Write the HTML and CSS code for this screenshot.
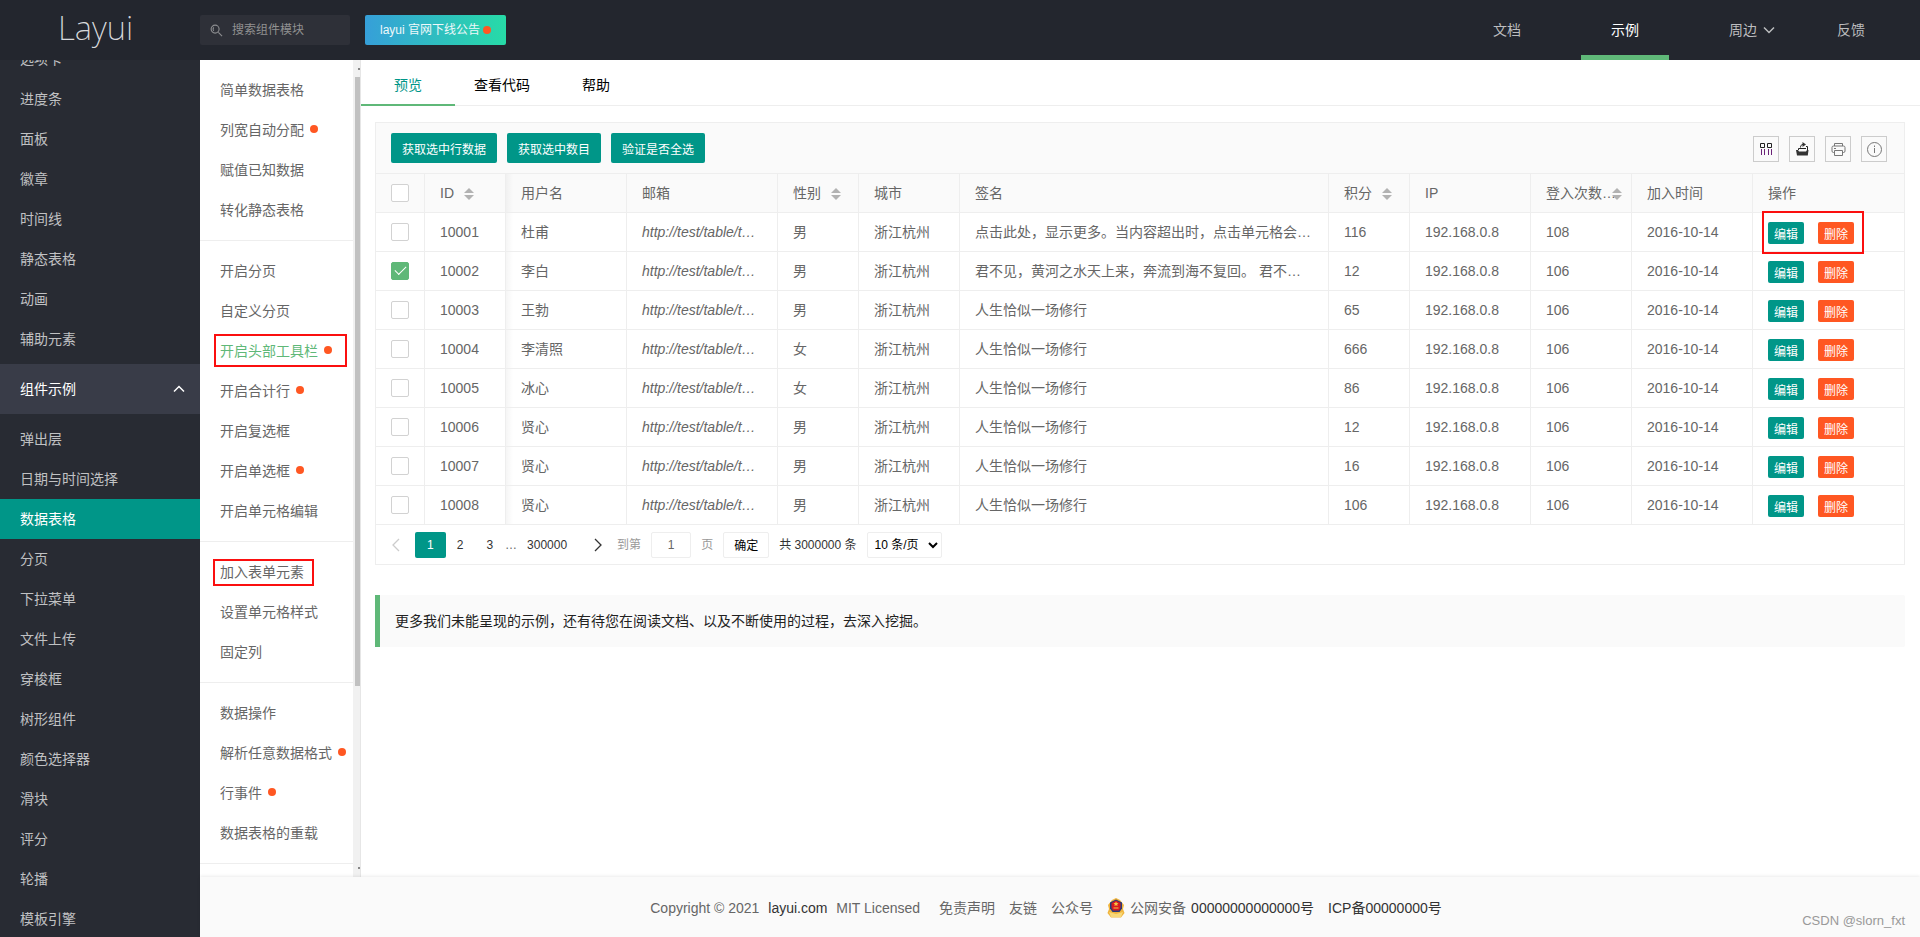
FILE: index.html
```html
<!DOCTYPE html>
<html lang="zh-CN">
<head>
<meta charset="utf-8">
<title>数据表格 - Layui</title>
<link rel="stylesheet" href="styles.css">
</head>
<body>
<header class="header">
  <a class="logo" href="#">Layui</a>
  <label class="search">
    <svg class="search-icon" viewBox="0 0 14 14" aria-hidden="true"><circle cx="5.5" cy="5.5" r="4.3"/><path d="M4 3.6a3 3 0 0 0 0 3.8M9 9l4 4"/></svg>
    <input type="text" placeholder="搜索组件模块" aria-label="搜索组件模块">
  </label>
  <a class="notice" href="#">layui 官网下线公告<i class="dot"></i></a>
  <nav class="top-nav">
    <a href="#">文档</a>
    <a href="#" class="active">示例</a>
    <a href="#" class="has-more">周边<svg class="chevron" viewBox="0 0 12 8" aria-hidden="true"><path d="M1 1.500l5 5 5-5"/></svg></a>
    <a href="#">反馈</a>
  </nav>
</header>
<div class="body">
  <aside class="side">
    <ul class="side-list side-first">
      <li><a href="#">选项卡</a></li>
      <li><a href="#">进度条</a></li>
      <li><a href="#">面板</a></li>
      <li><a href="#">徽章</a></li>
      <li><a href="#">时间线</a></li>
      <li><a href="#">静态表格</a></li>
      <li><a href="#">动画</a></li>
      <li><a href="#">辅助元素</a></li>
    </ul>
    <a class="side-title" href="#">组件示例<svg class="chevron" viewBox="0 0 12 8" aria-hidden="true"><path d="M1 6.500l5-5 5 5"/></svg></a>
    <ul class="side-list">
      <li><a href="#">弹出层</a></li>
      <li><a href="#">日期与时间选择</a></li>
      <li><a href="#" class="active">数据表格</a></li>
      <li><a href="#">分页</a></li>
      <li><a href="#">下拉菜单</a></li>
      <li><a href="#">文件上传</a></li>
      <li><a href="#">穿梭框</a></li>
      <li><a href="#">树形组件</a></li>
      <li><a href="#">颜色选择器</a></li>
      <li><a href="#">滑块</a></li>
      <li><a href="#">评分</a></li>
      <li><a href="#">轮播</a></li>
      <li><a href="#">模板引擎</a></li>
    </ul>
  </aside>
  <div class="page">
    <div class="content">
      <div class="sub">
        <div class="sub-menu">
          <ul>
            <li><a href="#">简单数据表格</a></li>
            <li><a href="#">列宽自动分配<i class="dot"></i></a></li>
            <li><a href="#">赋值已知数据</a></li>
            <li><a href="#">转化静态表格</a></li>
          </ul>
          <ul>
            <li><a href="#">开启分页</a></li>
            <li><a href="#">自定义分页</a></li>
            <li class="framed frame-tall"><a href="#" class="current">开启头部工具栏<i class="dot"></i></a></li>
            <li><a href="#">开启合计行<i class="dot"></i></a></li>
            <li><a href="#">开启复选框</a></li>
            <li><a href="#">开启单选框<i class="dot"></i></a></li>
            <li><a href="#">开启单元格编辑</a></li>
          </ul>
          <ul>
            <li class="framed frame-short"><a href="#">加入表单元素</a></li>
            <li><a href="#">设置单元格样式</a></li>
            <li><a href="#">固定列</a></li>
          </ul>
          <ul>
            <li><a href="#">数据操作</a></li>
            <li><a href="#">解析任意数据格式<i class="dot"></i></a></li>
            <li><a href="#">行事件<i class="dot"></i></a></li>
            <li><a href="#">数据表格的重载</a></li>
          </ul>
        </div>
        <div class="scrollbar" aria-hidden="true"><i class="arrow up"></i><span class="thumb"></span><i class="arrow down"></i></div>
      </div>
      <main class="main">
        <nav class="tabs">
          <a href="#" class="active">预览</a>
          <a href="#">查看代码</a>
          <a href="#">帮助</a>
        </nav>
        <section class="table-box">
          <div class="toolbar">
            <button type="button" class="btn">获取选中行数据</button>
            <button type="button" class="btn">获取选中数目</button>
            <button type="button" class="btn">验证是否全选</button>
            <div class="tools">
              <button type="button" class="tool" aria-label="筛选列"><svg viewBox="0 0 16 16"><path class="ink" d="M2.500 2.500h4v4h-4zM9.500 2.500h4v4h-4z"/><path class="violet" d="M3.500 8v6M6.500 8v6M10.500 8v6M13.500 8v6"/></svg></button>
              <button type="button" class="tool" aria-label="导出"><svg viewBox="0 0 16 16"><path class="solid" d="M2 9h2l1 1.500h7L13 9h1.500l-.7 5.500H3z"/><path class="ink" d="M4.500 9V7.500h3M12 5.500h1.500V9M7 7.500h5"/><path class="ink" d="M6.500 6.500c0-2 1-3 2.500-3"/><path class="solid" d="M8.500 1l3.500 2.500L8.500 6z"/></svg></button>
              <button type="button" class="tool" aria-label="打印"><svg viewBox="0 0 16 16"><g class="gray"><path d="M4.500 5V2.500h8V5M4.500 11.500H3.500A1.500 1.500 0 0 1 2 10V6.500A1.500 1.500 0 0 1 3.500 5h10A1.500 1.500 0 0 1 15 6.500V10a1.500 1.500 0 0 1-1.500 1.500h-1M4.500 9.500h8v5h-8zM4 7.500h2"/></g></svg></button>
              <button type="button" class="tool" aria-label="提示"><svg viewBox="0 0 16 16"><g class="gray"><circle cx="8.500" cy="8.500" r="7"/><path d="M8.500 7v5M8.500 4.500V6"/></g></svg></button>
            </div>
          </div>
          <table class="grid">
            <colgroup><col class="w-check"><col class="w-80"><col class="w-120"><col class="w-150"><col class="w-80"><col class="w-100"><col><col class="w-80"><col class="w-120"><col class="w-100"><col class="w-120"><col class="w-150"></colgroup>
            <thead>
              <tr>
                <th><input type="checkbox" aria-label="全选"></th>
                <th>ID<i class="sort"></i></th>
                <th>用户名</th>
                <th>邮箱</th>
                <th>性别<i class="sort"></i></th>
                <th>城市</th>
                <th>签名</th>
                <th>积分<i class="sort"></i></th>
                <th>IP</th>
                <th class="tight">登入次数…<i class="sort"></i></th>
                <th>加入时间</th>
                <th>操作</th>
              </tr>
            </thead>
            <tbody>
              <tr><td><input type="checkbox" aria-label="选择 10001"></td><td>10001</td><td>杜甫</td><td><a href="#">http://test/table/t…</a></td><td>男</td><td>浙江杭州</td><td>点击此处，显示更多。当内容超出时，点击单元格会…</td><td>116</td><td>192.168.0.8</td><td>108</td><td>2016-10-14</td><td class="ops ops-framed"><button type="button" class="mini">编辑</button><button type="button" class="mini danger">删除</button></td></tr>
              <tr><td><input type="checkbox" checked aria-label="选择 10002"></td><td>10002</td><td>李白</td><td><a href="#">http://test/table/t…</a></td><td>男</td><td>浙江杭州</td><td>君不见，黄河之水天上来，奔流到海不复回。 君不…</td><td>12</td><td>192.168.0.8</td><td>106</td><td>2016-10-14</td><td class="ops"><button type="button" class="mini">编辑</button><button type="button" class="mini danger">删除</button></td></tr>
              <tr><td><input type="checkbox" aria-label="选择 10003"></td><td>10003</td><td>王勃</td><td><a href="#">http://test/table/t…</a></td><td>男</td><td>浙江杭州</td><td>人生恰似一场修行</td><td>65</td><td>192.168.0.8</td><td>106</td><td>2016-10-14</td><td class="ops"><button type="button" class="mini">编辑</button><button type="button" class="mini danger">删除</button></td></tr>
              <tr><td><input type="checkbox" aria-label="选择 10004"></td><td>10004</td><td>李清照</td><td><a href="#">http://test/table/t…</a></td><td>女</td><td>浙江杭州</td><td>人生恰似一场修行</td><td>666</td><td>192.168.0.8</td><td>106</td><td>2016-10-14</td><td class="ops"><button type="button" class="mini">编辑</button><button type="button" class="mini danger">删除</button></td></tr>
              <tr><td><input type="checkbox" aria-label="选择 10005"></td><td>10005</td><td>冰心</td><td><a href="#">http://test/table/t…</a></td><td>女</td><td>浙江杭州</td><td>人生恰似一场修行</td><td>86</td><td>192.168.0.8</td><td>106</td><td>2016-10-14</td><td class="ops"><button type="button" class="mini">编辑</button><button type="button" class="mini danger">删除</button></td></tr>
              <tr><td><input type="checkbox" aria-label="选择 10006"></td><td>10006</td><td>贤心</td><td><a href="#">http://test/table/t…</a></td><td>男</td><td>浙江杭州</td><td>人生恰似一场修行</td><td>12</td><td>192.168.0.8</td><td>106</td><td>2016-10-14</td><td class="ops"><button type="button" class="mini">编辑</button><button type="button" class="mini danger">删除</button></td></tr>
              <tr><td><input type="checkbox" aria-label="选择 10007"></td><td>10007</td><td>贤心</td><td><a href="#">http://test/table/t…</a></td><td>男</td><td>浙江杭州</td><td>人生恰似一场修行</td><td>16</td><td>192.168.0.8</td><td>106</td><td>2016-10-14</td><td class="ops"><button type="button" class="mini">编辑</button><button type="button" class="mini danger">删除</button></td></tr>
              <tr><td><input type="checkbox" aria-label="选择 10008"></td><td>10008</td><td>贤心</td><td><a href="#">http://test/table/t…</a></td><td>男</td><td>浙江杭州</td><td>人生恰似一场修行</td><td>106</td><td>192.168.0.8</td><td>106</td><td>2016-10-14</td><td class="ops"><button type="button" class="mini">编辑</button><button type="button" class="mini danger">删除</button></td></tr>
            </tbody>
          </table>
          <div class="pager">
            <a href="#" class="arrow-link off" aria-label="上一页"><svg viewBox="0 0 8 14"><path d="M7 1L1 7l6 6"/></svg></a>
            <a href="#" class="num on">1</a>
            <a href="#" class="num">2</a>
            <a href="#" class="num">3</a>
            <span class="gap">…</span>
            <a href="#" class="num">300000</a>
            <a href="#" class="arrow-link" aria-label="下一页"><svg viewBox="0 0 8 14"><path d="M1 1l6 6-6 6"/></svg></a>
            <label class="jump">到第<input type="text" value="1">页</label>
            <button type="button" class="confirm">确定</button>
            <span class="total">共 3000000 条</span>
            <select class="limit" aria-label="每页条数"><option>10 条/页</option><option>20 条/页</option></select>
          </div>
        </section>
        <blockquote class="quote">更多我们未能呈现的示例，还有待您在阅读文档、以及不断使用的过程，去深入挖掘。</blockquote>
      </main>
    </div>
    <footer class="footer">
      <p class="copyright">Copyright © 2021 <a href="#" class="strong">layui.com</a> MIT Licensed</p>
      <a href="#">免责声明</a>
      <a href="#">友链</a>
      <a href="#">公众号</a>
      <span class="police"><svg viewBox="0 0 18 20" aria-hidden="true"><path fill="#f0b43c" d="M9 0l4 2 4 5-1 4 1.500 4-3.500 4.500H4L.5 15 2 11 1 7l4-5z"/><path fill="#f8d878" d="M2 14l7 2 7-2-2 5H4z"/><path fill="#273a78" d="M3 4.500L9 1.500l6 3v6L12.500 14h-7L3 10.500z"/><path fill="#d7191f" d="M4.500 5L9 2.500 13.500 5v5L12 12.500H6L4.500 10z"/><path fill="#f6c445" d="M9 3.500l.8 1.600 1.700.2-1.300 1.100.4 1.700L9 7.300l-1.600.8.4-1.700-1.300-1.100 1.700-.2zM6.500 9.500h5v1h-5z"/></svg>公网安备 <a href="#" class="strong">00000000000000号</a></span>
      <a href="#" class="strong">ICP备00000000号</a>
    </footer>
  </div>
</div>
<span class="watermark">CSDN @slorn_fxt</span>
</body>
</html>
```

FILE: styles.css
```css
*, *::before, *::after { box-sizing: border-box; }

body {
  margin: 0;
  height: 100vh;
  display: flex;
  flex-direction: column;
  overflow: hidden;
  background: #fff;
  color: #333;
  font: 14px/24px "Liberation Sans", "Noto Sans CJK SC", sans-serif;
}

a { color: inherit; text-decoration: none; }
ul { margin: 0; padding: 0; list-style: none; }
button, input, select { font-family: inherit; margin: 0; }

.dot {
  display: inline-block;
  width: 8px;
  height: 8px;
  border-radius: 50%;
  background: #ff5722;
}

.chevron {
  width: 12px;
  height: 8px;
  fill: none;
  stroke: currentColor;
  stroke-width: 1.5;
}

/* Header */
.header {
  flex: none;
  display: flex;
  align-items: center;
  height: 60px;
  background: #23262e;
}
.logo {
  width: 200px;
  padding-left: 58px;
  color: #d8d9dc;
  font: 200 33px/60px "Noto Sans", "Open Sans", sans-serif;
  height: 64px;
}
.search {
  display: flex;
  align-items: center;
  gap: 9px;
  width: 150px;
  height: 30px;
  margin-right: 15px;
  padding: 0 10px;
  border-radius: 2px;
  background: #2e3038;
}
.search-icon {
  flex: none;
  width: 13px;
  height: 13px;
  fill: none;
  stroke: #8c8d90;
  stroke-width: 1.2;
}
.search input {
  width: 100%;
  padding: 0;
  border: 0;
  outline: 0;
  background: none;
  color: #999;
  font-size: 12px;
}
.search input::placeholder { color: #919191; }
.notice {
  display: flex;
  align-items: center;
  gap: 3px;
  height: 30px;
  padding: 0 15px;
  border-radius: 2px;
  background: linear-gradient(to right, #369fd9, #27dba7);
  color: #eef8fa;
  font-size: 12px;
}
.top-nav {
  display: flex;
  gap: 30px;
  margin-left: auto;
  padding-right: 25px;
  color: #bcbdbf;
}
.top-nav a {
  height: 60px;
  padding: 0 30px;
  border-bottom: 5px solid transparent;
  line-height: 60px;
}
.top-nav .active { border-color: #5fb878; color: #fff; }
.top-nav .has-more { padding-right: 0; }
.top-nav .chevron { margin: 0 2px 1px 6px; }

/* Left navigation */
.body { flex: 1; display: flex; min-height: 0; }
.side {
  flex: none;
  width: 200px;
  overflow: hidden;
  background: #282b33;
  color: #c0c1c3;
}
.side-first { margin-top: -21px; }
.side-list { padding-bottom: 5px; }
.side-list a {
  display: block;
  padding-left: 20px;
  line-height: 40px;
}
.side-list .active { background: #009688; color: #fff; }
.side-title {
  display: flex;
  align-items: center;
  justify-content: space-between;
  height: 50px;
  margin-bottom: 5px;
  padding: 0 15px 0 20px;
  background: #393c48;
  color: #fff;
}

/* Example list */
.page { flex: 1; display: flex; flex-direction: column; min-width: 0; }
.content { flex: 1; display: flex; min-height: 0; }
.sub {
  flex: none;
  display: flex;
  width: 161px;
  overflow: hidden;
  border-right: 1px solid #e6e6e6;
}
.sub-menu { flex: 1; color: #666; }
.sub-menu ul { padding: 10px 0; border-bottom: 1px solid #eee; }
.sub-menu a {
  display: flex;
  align-items: center;
  height: 40px;
  padding-left: 20px;
  white-space: nowrap;
}
.sub-menu .dot { margin: 0 0 2px 6px; }
.sub-menu .current { color: #5fb878; }
.framed { position: relative; }
.framed::after {
  content: "";
  position: absolute;
  border: 2px solid #fb0f0f;
}
.frame-tall::after { left: 14px; right: 6px; top: 3px; height: 33px; }
.frame-short::after { left: 13px; width: 101px; top: 7px; height: 27px; }

.scrollbar {
  display: flex;
  flex-direction: column;
  align-items: flex-end;
  width: 7px;
  padding: 8px 0;
  background: #f1f1f1;
}
.thumb {
  width: 5px;
  height: 76%;
  margin: 7px 0 auto;
  background: #c1c1c1;
}
.arrow { width: 2px; height: 2px; background: #888; }

/* Tabs */
.main { flex: 1; min-width: 0; }
.tabs {
  display: flex;
  height: 46px;
  border-bottom: 1px solid #eee;
  color: #000;
}
.tabs a {
  width: 94px;
  height: 46px;
  text-align: center;
  line-height: 50px;
}
.tabs .active { border-bottom: 2px solid #5fb878; color: #009688; }

/* Table */
.table-box {
  margin: 16px 15px 30px 14px;
  border: 1px solid #eee;
  color: #666;
}
.toolbar {
  display: flex;
  align-items: flex-start;
  gap: 10px;
  height: 51px;
  padding: 10px 17px 0 15px;
  border-bottom: 1px solid #eee;
  background: #fafafa;
}
.btn {
  height: 30px;
  padding: 0 11px;
  border: 0;
  border-radius: 2px;
  background: #009688;
  color: #fff;
  font-size: 12px;
}
.tools { display: flex; gap: 10px; margin-left: auto; padding-top: 3px; }
.tool {
  width: 26px;
  height: 26px;
  padding: 4px;
  border: 1px solid #ccc;
  background: none;
}
.tool svg { display: block; width: 16px; height: 16px; fill: none; }
.ink { stroke: #222; }
.violet { stroke: #6b2378; }
.solid { fill: #333; }
.gray { stroke: #777; }

.grid {
  width: 100%;
  table-layout: fixed;
  border-collapse: separate;
  border-spacing: 0;
}
.w-check { width: 49px; }
.w-80 { width: 81px; }
.w-100 { width: 101px; }
.w-120 { width: 121px; }
.w-150 { width: 151px; }
.grid th, .grid td {
  height: 39px;
  padding: 0 15px;
  border: 0 solid #eee;
  border-width: 0 1px 1px 0;
  overflow: hidden;
  text-align: left;
  text-overflow: ellipsis;
  white-space: nowrap;
  font-weight: 400;
}
.grid th { background-color: #fafafa; }
.grid th:last-child, .grid td:last-child { border-right: 0; }
.grid th:nth-child(3), .grid td:nth-child(3) {
  background-image: linear-gradient(to right, rgba(0, 0, 0, .04), transparent 7px);
}
.grid td a { font-style: italic; }
.grid input {
  appearance: none;
  display: block;
  width: 18px;
  height: 18px;
  border: 1px solid #d2d2d2;
  border-radius: 2px;
  background: #fff;
}
.grid input:checked { border-color: #5fb878; background: #5fb878; }
.grid input:checked::after {
  content: "";
  display: block;
  width: 11px;
  height: 6px;
  margin: 3px;
  border: solid #fff;
  border-width: 0 0 1px 1px;
  rotate: -45deg;
}
.sort {
  display: inline-flex;
  flex-direction: column;
  gap: 2px;
  margin-left: 10px;
  vertical-align: middle;
}
.sort::before, .sort::after {
  content: "";
  border: 5px solid transparent;
}
.sort::before { border-top: 0; border-bottom-color: #b2b2b2; }
.sort::after { border-bottom: 0; border-top-color: #b2b2b2; }
.grid .tight { padding-right: 5px; }
.tight .sort { margin-left: -4px; }

.mini {
  height: 22px;
  margin-right: 14px;
  padding: 0 6px;
  border: 0;
  border-radius: 2px;
  background: #009688;
  color: #fff;
  font-size: 12px;
  vertical-align: middle;
}
.danger { margin: 0; background: #ff5722; }
.grid .ops-framed { position: relative; overflow: visible; }
.ops-framed::after {
  content: "";
  position: absolute;
  left: 9px;
  top: -2px;
  width: 102px;
  height: 43px;
  border: 2px solid #fb0f0f;
}

/* Pagination */
.pager {
  display: flex;
  align-items: center;
  height: 39px;
  padding: 0 8px;
  color: #333;
  font-size: 12px;
}
.num { padding: 0 12px; line-height: 26px; }
.num + .num { margin-left: -1px; }
.on { border-radius: 2px; background: #009688; color: #fff; }
.gap { width: 12px; margin-right: -2px; color: #666; }
.arrow-link { padding: 0 15px; }
.arrow-link svg { display: block; width: 8px; height: 14px; fill: none; stroke: #333; stroke-width: 1.3; }
.off { padding-left: 8px; }
.off svg { stroke: #ccc; }
.jump { display: flex; align-items: center; gap: 10px; color: #999; }
.jump input {
  width: 40px;
  height: 26px;
  border: 1px solid #eee;
  border-radius: 2px;
  color: #666;
  font-size: 12px;
  text-align: center;
}
.confirm {
  height: 26px;
  margin: 0 10px;
  padding: 0 10px;
  border: 1px solid #eee;
  border-radius: 2px;
  background: #fff;
  color: #000;
  font-size: 12px;
}
.limit {
  width: 75px;
  height: 26px;
  margin-left: 10px;
  padding: 0 3px;
  border: 1px solid #eee;
  border-radius: 2px;
  background: #fff;
  color: #000;
  font-size: 12px;
}

.quote {
  margin: 0 15px 0 14px;
  padding: 14px 15px;
  border-left: 5px solid #5fb878;
  border-radius: 0 2px 2px 0;
  background: #fafafa;
  color: #222;
}

/* Footer */
.footer {
  flex: none;
  display: flex;
  align-items: center;
  justify-content: center;
  gap: 14px;
  height: 60px;
  padding: 2px 28px 0 0;
  background: #fafafa;
  box-shadow: 0 -1px 3px rgba(0, 0, 0, .08);
  color: #666;
}
.footer .strong { color: #333; }
.copyright { margin: 0 5px 0 0; }
.copyright .strong { margin: 0 5px; }
.police { display: flex; align-items: center; gap: 5px; }
.police svg { width: 18px; height: 20px; }

.watermark {
  position: absolute;
  right: 15px;
  bottom: 4px;
  color: #999;
  font-size: 13px;
}
```
